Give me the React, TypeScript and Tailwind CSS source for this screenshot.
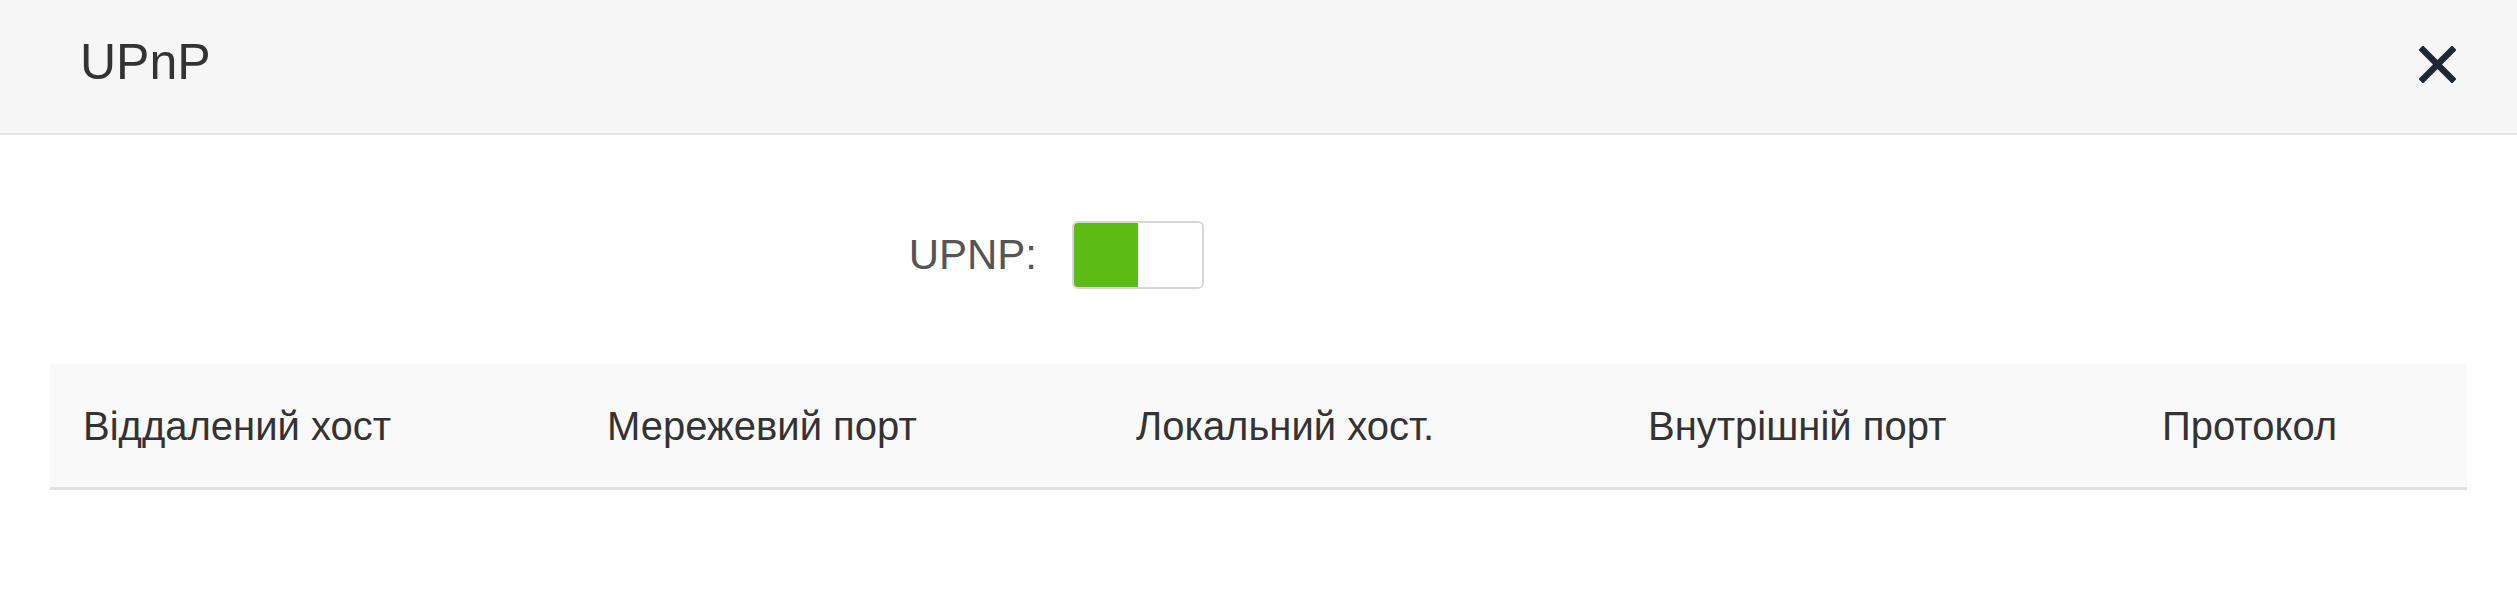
import React from "react";

export default function App() {
  const cols = [
    "Віддалений хост",
    "Мережевий порт",
    "Локальний хост.",
    "Внутрішній порт",
    "Протокол",
  ];
  return (
    <div className="w-[2517px] h-[600px] bg-white text-[#333] font-['Liberation_Sans',Arial,sans-serif] overflow-hidden">
      <div className="h-[135px] bg-[#f6f6f7] border-b-[2px] border-[#e4e4e5] flex items-center justify-between pl-[80px] pr-[61px]">
        <div className="text-[50px] leading-none pb-[10px] text-[#333]">UPnP</div>
        <button className="w-[37px] h-[37px] mb-[4px] flex items-center justify-center">
          <svg width="37" height="37" viewBox="0 0 37 37">
            <path d="M4 4 L33 33 M33 4 L4 33" stroke="#1e2733" strokeWidth="6.5" strokeLinecap="square" />
          </svg>
        </button>
      </div>
      <div className="grid grid-cols-[1037px_auto] gap-x-[35px] items-center mt-[86px]">
        <div className="text-right text-[42px] leading-none text-[#555]">UPNP:</div>
        <div className="w-[132px] h-[68px] flex rounded-[6px] border-[2px] border-[#d5d7da] overflow-hidden bg-white">
          <div className="w-[64px] h-full bg-[#5cbc13]" />
          <div className="flex-1 h-full bg-white" />
        </div>
      </div>
      <div className="mx-[50px] mt-[75px] w-[2417px]">
        <div className="grid grid-cols-[524px_529px_512px_514px_1fr] items-center h-[126px] pl-[33px] bg-[#f9f9f9] border-b-[3px] border-[#e2e2e2] text-[40px] leading-none text-[#333]">
          {cols.map((c) => (
            <div key={c} className="whitespace-nowrap">{c}</div>
          ))}
        </div>
      </div>
    </div>
  );
}
